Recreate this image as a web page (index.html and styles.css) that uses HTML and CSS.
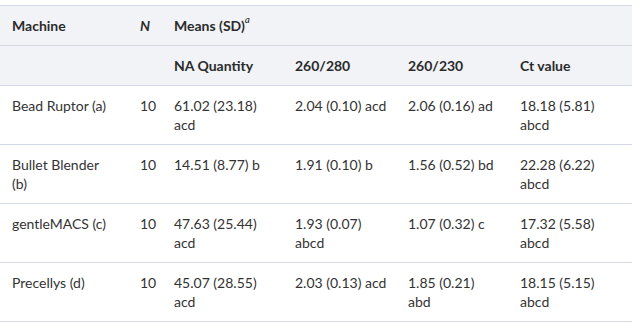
FILE: index.html
```html
<!DOCTYPE html>
<html lang="en">
<head>
    <meta charset="UTF-8">
    <meta name="viewport" content="width=device-width, initial-scale=1.0">
    <title>Homogenizer comparison</title>
    <link rel="stylesheet" href="styles.css">
</head>
<body>

    <table class="results">
        <colgroup>
            <col class="col-machine">
            <col class="col-n">
            <col class="col-qty">
            <col class="col-280">
            <col class="col-230">
            <col class="col-ct">
        </colgroup>
        <thead>
            <tr>
                <th>Machine</th>
                <th><i>N</i></th>
                <th colspan="4">Means (SD)<sup>a</sup></th>
            </tr>
            <tr>
                <th></th>
                <th></th>
                <th>NA Quantity</th>
                <th>260/280</th>
                <th>260/230</th>
                <th>Ct value</th>
            </tr>
        </thead>
        <tbody>
            <tr>
                <td>Bead Ruptor (a)</td>
                <td>10</td>
                <td>61.02 (23.18) acd</td>
                <td>2.04 (0.10) acd</td>
                <td>2.06 (0.16) ad</td>
                <td>18.18 (5.81) abcd</td>
            </tr>
            <tr>
                <td>Bullet Blender (b)</td>
                <td>10</td>
                <td>14.51 (8.77) b</td>
                <td>1.91 (0.10) b</td>
                <td>1.56 (0.52) bd</td>
                <td>22.28 (6.22) abcd</td>
            </tr>
            <tr>
                <td>gentleMACS (c)</td>
                <td>10</td>
                <td>47.63 (25.44) acd</td>
                <td>1.93 (0.07) abcd</td>
                <td>1.07 (0.32) c</td>
                <td>17.32 (5.58) abcd</td>
            </tr>
            <tr>
                <td>Precellys (d)</td>
                <td>10</td>
                <td>45.07 (28.55) acd</td>
                <td>2.03 (0.13) acd</td>
                <td>1.85 (0.21) abd</td>
                <td>18.15 (5.15) abcd</td>
            </tr>
        </tbody>
    </table>

</body>
</html>
```

FILE: styles.css
```css
* {
    margin: 0;
    padding: 0;
    box-sizing: border-box;
}

body {
    font-family: 'Lato', 'Liberation Sans', sans-serif;
    font-size: 14px;
    color: #333;
    background: #fff;
    padding-top: 5px;
}

.results {
    width: 632px;
    border-collapse: collapse;
    table-layout: fixed;
}

.col-machine { width: 128px; }
.col-n { width: 34px; }
.col-qty { width: 121px; }
.col-280 { width: 113px; }
.col-230 { width: 112px; }
.col-ct { width: 124px; }

.results th,
.results td {
    text-align: left;
    vertical-align: top;
    padding: 10px 10px 10px 12px;
    line-height: 19px;
    border-bottom: 1px solid #d5d9e5;
}

/* column wrap widths */
.results td:nth-child(1) { padding-right: 18px; }
.results td:nth-child(4) { padding-right: 6px; }

.results th {
    background: #f1f3f7;
    font-weight: bold;
    color: #2b2b2b;
}

.results thead tr:first-child th {
    border-top: 1px solid #d5d9e5;
}

.results sup {
    font-style: italic;
    font-weight: normal;
    font-size: 10px;
    line-height: 0;
    position: relative;
    top: -2px;
}
```
